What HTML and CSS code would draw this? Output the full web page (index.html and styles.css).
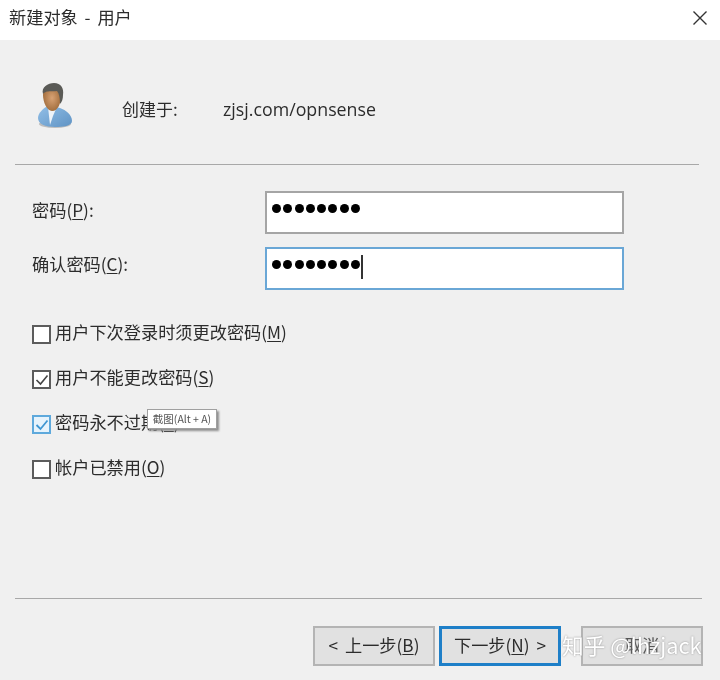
FILE: index.html
```html
<!DOCTYPE html>
<html lang="zh-CN">
<head>
<meta charset="utf-8">
<title>新建对象 - 用户</title>
<link rel="stylesheet" href="styles.css">
</head>
<body>
<div class="dialog">
  <header class="titlebar">
    <span class="title">新建对象 - 用户</span>
    <svg class="close" width="16" height="16" viewBox="0 0 16 16"><path d="M1.5 1.5 14.5 14.5M14.5 1.5 1.5 14.5" stroke="#333" stroke-width="1.4" fill="none"/></svg>
  </header>
  <main class="content">
    <section class="info">
      <svg class="avatar" width="38" height="46" viewBox="0 0 38 46">
        <defs>
          <radialGradient id="skin" cx="0.5" cy="0.5" r="0.65"><stop offset="0" stop-color="#d8a274"/><stop offset="1" stop-color="#94602f"/></radialGradient>
          <linearGradient id="shirt" x1="0" y1="0" x2="1" y2="1"><stop offset="0" stop-color="#93c0e8"/><stop offset="1" stop-color="#5f93c4"/></linearGradient>
        </defs>
        <ellipse cx="19" cy="41" rx="16" ry="4" fill="#bdbdbd"/>
        <path d="M2 35C2 30 7 26 10 24L13 22 24 25C30 27 36 32 36 38C36 43 27 44 19 44C9 44 2 41 2 35Z" fill="url(#shirt)"/>
        <path d="M12 24 14 42 17 33 20 26Z" fill="#eef3f8"/>
        <path d="M7 12C7 5 11 2 16 2C21 2 25 6 25 13C25 20 22 28 16 28C11 28 7 19 7 12Z" fill="url(#skin)"/>
        <path d="M7 11C5 4 12 0 18 0C25 0 28 5 27 12C27 16 26 19 24 21C24 15 23 10 21 8C16 9 10 7 7 11Z" fill="#5a5a56"/>
      </svg>
      <span class="info-label">创建于:</span>
      <span class="info-path">zjsj.com/opnsense</span>
    </section>
    <hr class="rule">
    <section class="fields">
      <div class="field">
        <span class="field-label">密码(<u>P</u>):</span>
        <div class="input">
          <span class="dot"></span><span class="dot"></span><span class="dot"></span><span class="dot"></span><span class="dot"></span><span class="dot"></span><span class="dot"></span><span class="dot"></span>
        </div>
      </div>
      <div class="field">
        <span class="field-label">确认密码(<u>C</u>):</span>
        <div class="input focused">
          <span class="dot"></span><span class="dot"></span><span class="dot"></span><span class="dot"></span><span class="dot"></span><span class="dot"></span><span class="dot"></span><span class="dot"></span><span class="caret"></span>
        </div>
      </div>
    </section>
    <section class="checks">
      <div class="check"><span class="box"></span><span>用户下次登录时须更改密码(<u>M</u>)</span></div>
      <div class="check"><span class="box"><svg viewBox="0 0 18 18" width="18" height="18"><path d="M3.5 9 7.5 13 14.5 4.5" stroke="#444" stroke-width="1.6" fill="none"/></svg></span><span>用户不能更改密码(<u>S</u>)</span></div>
      <div class="check hover"><span class="box"><svg viewBox="0 0 18 18" width="18" height="18"><path d="M3.5 9 7.5 13 14.5 4.5" stroke="#3f96d2" stroke-width="1.8" fill="none"/></svg></span><span>密码永不过期(<u>X</u>)</span><span class="tooltip">截图(Alt + A)</span></div>
      <div class="check"><span class="box"></span><span>帐户已禁用(<u>O</u>)</span></div>
    </section>
    <div class="spacer"></div>
    <hr class="rule bottom">
    <footer class="actions">
      <button class="btn">&lt; 上一步(<u>B</u>)</button>
      <button class="btn primary">下一步(<u>N</u>) &gt;</button>
      <button class="btn cancel">取消</button>
      <span class="watermark">知乎 @lhzjack</span>
    </footer>
  </main>
</div>
</body>
</html>
```
FILE: styles.css
```css
* { box-sizing: border-box; }
html, body { margin: 0; padding: 0; background: #f0f0f0; }
body { width: 720px; height: 680px; overflow: hidden; font-family: "Open Sans", "Noto Sans CJK SC", sans-serif; color: #2c2c2c; }
.dialog { width: 720px; height: 680px; display: flex; flex-direction: column; filter: blur(0.5px); }
.titlebar { height: 40px; flex: none; background: #fff; display: flex; align-items: center; justify-content: space-between; padding: 0 12px 5px 9px; }
.title { font-size: 17.2px; word-spacing: 3px; color: #2c2c2c; font-family: "Noto Sans CJK SC", sans-serif; margin-top: -2px; }
.content { flex: 1; display: flex; flex-direction: column; padding: 0 16px 14px 15px; background: #f0f0f0; }
.info { height: 124px; flex: none; display: flex; align-items: center; padding: 2px 0 0 21px; }
.avatar { flex: none; margin-top: 6px; }
.info-label { width: 101px; margin-left: 48px; font-size: 17px; font-family: "Noto Sans CJK SC", sans-serif; margin-top: 11px; }
.info-path { margin-top: 11px; font-size: 17.8px; }
.rule { margin: 0 5px 0 0; height: 1px; border: 0; background: #a8a8a8; flex: none; }
.rule.bottom { margin-right: 2px; }
.fields { display: flex; flex-direction: column; gap: 13px; padding: 26px 0 0 17px; }
.field { display: flex; align-items: center; height: 43px; }
.field-label { width: 233px; font-size: 17.2px; font-family: "Noto Sans CJK SC", sans-serif; padding-bottom: 6px; }
.field + .field .field-label { padding-bottom: 10px; }
u { text-underline-offset: 2px; text-decoration-thickness: 1px; }
.input { width: 359px; height: 43px; background: #fff; border: 2px solid #a5a5a5; display: flex; align-items: flex-start; gap: 2.3px; padding: 11px 0 0 5px; }
.input.focused { border-color: #6aa7d6; }
.dot { width: 9px; height: 9px; border-radius: 50%; background: #000; flex: none; }
.caret { width: 2px; height: 24px; margin: -5px 0 0 -1px; background: #333; flex: none; }
.checks { display: flex; flex-direction: column; gap: 25px; padding: 34px 0 0 17px; }
.check { position: relative; display: flex; align-items: center; gap: 4px; height: 20px; font-size: 17.2px; font-family: "Noto Sans CJK SC", sans-serif; white-space: nowrap; }
.check > span:nth-child(2) { margin-top: -6px; }
.box { width: 19px; height: 19px; flex: none; background: #fff; border: 2px solid #5c5c5c; display: block; line-height: 0; }
.box svg { margin: -1px; }
.hover .box { border-color: #5ea9dc; background: #e6f3fc; }
.tooltip { position: absolute; left: 115px; top: -5px; width: 70px; height: 20px; margin: 0; background: #fff; border: 1px solid #a0a0a0; box-shadow: 2px 2px 2px #8f8f8f; font-size: 10.5px; line-height: 17px; text-align: center; color: #555; }
.spacer { flex: 1; }
.actions { position: relative; display: flex; gap: 4px; padding: 27px 0 0 298px; }
.btn { flex: none; width: 122px; height: 40px; padding: 0 0 4px; background: #e1e1e1; border: 2px solid #b4b4b4; font-family: "Noto Sans CJK SC", sans-serif; font-size: 17.2px; word-spacing: 3px; color: #2c2c2c; }
.btn.primary { border: 3px solid #1e7fc8; }
.btn.cancel { margin-left: 16px; color: #555; }
.watermark { position: absolute; left: 547px; top: 30px; font-size: 21.7px; color: #fff; white-space: nowrap; text-shadow: 0 0 2px #8a8a8a; font-family: "Noto Sans CJK SC", sans-serif; }
```
